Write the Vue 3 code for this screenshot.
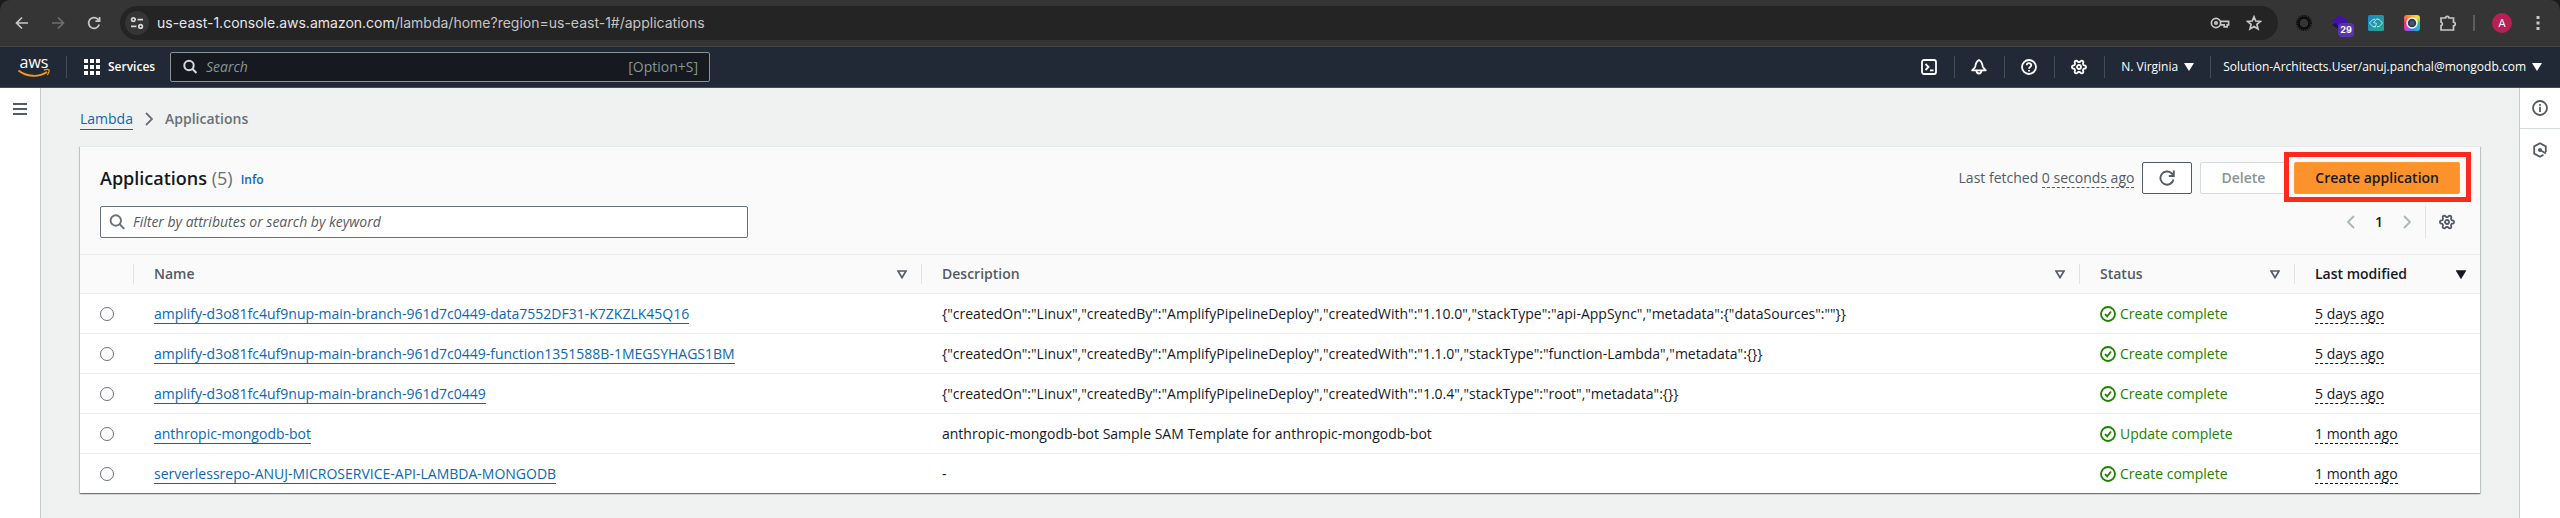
<script setup>
import { ref } from 'vue'

const selected = ref('')

const applications = [
  {
    name: 'amplify-d3o81fc4uf9nup-main-branch-961d7c0449-data7552DF31-K7ZKZLK45Q16',
    description: '{"createdOn":"Linux","createdBy":"AmplifyPipelineDeploy","createdWith":"1.10.0","stackType":"api-AppSync","metadata":{"dataSources":""}}',
    status: 'Create complete',
    modified: '5 days ago'
  },
  {
    name: 'amplify-d3o81fc4uf9nup-main-branch-961d7c0449-function1351588B-1MEGSYHAGS1BM',
    description: '{"createdOn":"Linux","createdBy":"AmplifyPipelineDeploy","createdWith":"1.1.0","stackType":"function-Lambda","metadata":{}}',
    status: 'Create complete',
    modified: '5 days ago'
  },
  {
    name: 'amplify-d3o81fc4uf9nup-main-branch-961d7c0449',
    description: '{"createdOn":"Linux","createdBy":"AmplifyPipelineDeploy","createdWith":"1.0.4","stackType":"root","metadata":{}}',
    status: 'Create complete',
    modified: '5 days ago'
  },
  {
    name: 'anthropic-mongodb-bot',
    description: 'anthropic-mongodb-bot Sample SAM Template for anthropic-mongodb-bot',
    status: 'Update complete',
    modified: '1 month ago'
  },
  {
    name: 'serverlessrepo-ANUJ-MICROSERVICE-API-LAMBDA-MONGODB',
    description: '-',
    status: 'Create complete',
    modified: '1 month ago'
  }
]

const columns = [
  { key: 'name', label: 'Name' },
  { key: 'description', label: 'Description' },
  { key: 'status', label: 'Status' },
  { key: 'modified', label: 'Last modified', sorted: true }
]

// Outline of the six-toothed settings gear in a 16x16 box.
const gearPath = (() => {
  const points = []
  for (let a = 0; a < 360; a += 6) {
    const wave = Math.cos((a * 6 * Math.PI) / 180)
    const r = 6 + 1.1 * Math.tanh(1.8 * wave)
    const t = (a * Math.PI) / 180
    points.push(`${(8 + r * Math.cos(t)).toFixed(2)} ${(8 + r * Math.sin(t)).toFixed(2)}`)
  }
  return `M${points.join('L')}Z`
})()
</script>

<template>
  <div class="page">
    <header class="browser">
      <div class="browser-nav">
        <button type="button" class="bare" aria-label="Back">
          <svg class="ico" viewBox="0 0 16 16"><path d="M14 8H3M8 2.5 2.5 8 8 13.5" stroke="#c7c7c7" /></svg>
        </button>
        <button type="button" class="bare" aria-label="Forward">
          <svg class="ico" viewBox="0 0 16 16"><path d="M2 8h11M8 2.5 13.5 8 8 13.5" stroke="#6f6f6f" /></svg>
        </button>
        <button type="button" class="bare" aria-label="Reload">
          <svg class="ico" viewBox="0 0 16 16"><path d="M13.2 9.6A5.4 5.4 0 1 1 11.9 4.2L13.4 5.8M13.6 2v4.2H9.4" stroke="#c7c7c7" /></svg>
        </button>
      </div>
      <div class="address">
        <span class="site">
          <svg class="ico" viewBox="0 0 16 16" stroke="#d6d6d6">
            <circle cx="4.4" cy="4.6" r="1.8" /><path d="M8.5 4.6H14M2 11.4h5.5" /><circle cx="11.6" cy="11.4" r="1.8" />
          </svg>
        </span>
        <span class="url">us-east-1.console.aws.amazon.com<span class="path">/lambda/home?region=us-east-1#/applications</span></span>
        <button type="button" class="bare" aria-label="Passwords">
          <svg class="key" viewBox="0 0 20 16" stroke="#c7c7c7">
            <circle cx="6" cy="8" r="4.6" /><circle cx="6" cy="8" r="1.2" />
            <path d="M10.4 6.4h8.2v3.4h-1.4v2h-3v-2h-4" />
          </svg>
        </button>
        <button type="button" class="bare" aria-label="Bookmark">
          <svg class="ico" viewBox="0 0 16 16"><path d="m8 1.8 1.8 4.2 4.6.4-3.5 3 1.1 4.5L8 11.5l-4 2.4 1.1-4.500-3.500-3L6.200 6Z" stroke="#c7c7c7" /></svg>
        </button>
      </div>
      <div class="extensions">
        <svg class="ico" viewBox="0 0 16 16">
          <circle cx="8" cy="8" r="5.400" stroke="#0c0c0c" stroke-width="2.200" />
          <circle cx="8" cy="8" r="7.100" stroke="#0c0c0c" stroke-width="1.800" stroke-dasharray="1.200 1" />
        </svg>
        <span class="ext-badge">
          <svg class="ico" viewBox="0 0 16 16">
            <path d="m8 5 8 5-8 5-8-5Z" fill="#1d0f6b" /><path d="m8 0 8 6-8 5.500L0 6Z" fill="#4310a8" />
          </svg>
          <span class="count">29</span>
        </span>
        <svg class="ico" viewBox="0 0 16 16">
          <defs>
            <linearGradient id="teal" x1="0" y1="0" x2="1" y2="1"><stop stop-color="#1f86c4" /><stop offset="1" stop-color="#21a890" /></linearGradient>
          </defs>
          <rect width="16" height="16" rx="1.500" fill="url(#teal)" />
          <path d="M7 4.200 4.800 4.500 1.500 8l3.300 3.500 2.200.3M9 4.200l2.200.3L14.500 8l-3.300 3.500-2.200.3M9.300 3.200 5.500 7.500l3 1L7 12.500" stroke="#c9f1ee" stroke-width="0.900" />
        </svg>
        <span class="lens">
          <svg class="ico" viewBox="0 0 16 16">
            <circle cx="8" cy="8" r="5" fill="#2c3a4b" stroke="#fff" stroke-width="1.500" /><circle cx="8" cy="8" r="2.600" fill="#44566b" />
          </svg>
        </span>
        <svg class="ico" viewBox="0 0 16 16">
          <path d="M1 3h4.600a1.700 1.700 0 0 1 3.400 0h4.500v4.200a1.800 1.800 0 0 1 0 3.600V15H1v-4.300a1.800 1.800 0 0 0 0-3.500Z" stroke="#c7c7c7" stroke-width="1.700" />
        </svg>
      </div>
      <span class="bar-split"></span>
      <button type="button" class="avatar">A</button>
      <button type="button" class="bare" aria-label="Browser menu">
        <svg class="ico" viewBox="0 0 16 16"><path d="M8 1v3M8 6.500v3M8 12v3" stroke="#c7c7c7" stroke-width="3" /></svg>
      </button>
    </header>

    <nav class="topnav">
      <a href="#" class="logo" aria-label="AWS home">
        <svg viewBox="0 -6 34 36">
          <text x="17" y="13" text-anchor="middle" fill="#fff" font-size="16">aws</text>
          <path d="M1.500 15.500c8 6.500 20 7 28.500 1.500" stroke="#f8991d" stroke-width="1.800" />
          <path d="M26.800 15.200c2-.8 4.500-1 5.200-.3.500.8-.3 3.400-1.800 5" stroke="#f8991d" stroke-width="1.300" />
        </svg>
      </a>
      <span class="nav-split"></span>
      <button type="button" class="services">
        <svg class="ico" viewBox="0 0 16 16">
          <path fill="#fff" d="M0 0h4v4H0zM6 0h4v4H6zM12 0h4v4h-4zM0 6h4v4H0zM6 6h4v4H6zM12 6h4v4h-4zM0 12h4v4H0zM6 12h4v4H6zM12 12h4v4h-4z" />
        </svg>
        Services
      </button>
      <label class="global-search">
        <svg class="ico" viewBox="0 0 16 16" stroke="#d5dbdb" stroke-width="2"><circle cx="7" cy="6.500" r="4.700" /><path d="m10.500 10 4 4" /></svg>
        <input type="search" placeholder="Search" aria-label="Search" />
        <span>[Option+S]</span>
      </label>
      <div class="nav-right">
        <button type="button" class="nav-icon" aria-label="CloudShell">
          <svg class="ico" viewBox="0 0 16 16" stroke="#fff" stroke-width="1.800"><rect x="1" y="1" width="14" height="14" rx="2" /><path d="m4.500 5 3 3-3 3M9 11.300h3.500" /></svg>
        </button>
        <button type="button" class="nav-icon" aria-label="Notifications">
          <svg class="ico" viewBox="0 0 16 16" stroke="#fff" stroke-width="1.800" stroke-linejoin="round"><path d="M8 1C5.500 2.500 4.500 4.500 4.200 8L1.200 11.300h13.600l-3-3.300C11.500 4.500 10.500 2.500 8 1ZM5.500 11.500a2.500 3 0 0 0 5 0" /></svg>
        </button>
        <button type="button" class="nav-icon" aria-label="Help">
          <svg class="ico" viewBox="0 0 16 16" stroke="#fff" stroke-width="1.800"><circle cx="8" cy="8" r="7" /><path d="M5.700 6.300C5.700 3.500 10.300 3.500 10.300 6.200 10.300 7.900 8 7.900 8 9.800M8 10.900v1.700" /></svg>
        </button>
        <button type="button" class="nav-icon" aria-label="Settings">
          <svg class="ico" viewBox="0 0 16 16" stroke="#fff" stroke-width="1.800"><path :d="gearPath" /><circle cx="8" cy="8" r="2" /></svg>
        </button>
        <button type="button" class="nav-menu region">N. Virginia<svg class="caret" viewBox="0 0 10 8"><path d="M0 0h10L5 8Z" fill="#fff" /></svg></button>
        <button type="button" class="nav-menu account">Solution-Architects.User/anuj.panchal@mongodb.com<svg class="caret" viewBox="0 0 10 8"><path d="M0 0h10L5 8Z" fill="#fff" /></svg></button>
      </div>
    </nav>

    <div class="body">
      <aside class="rail left">
        <button type="button" class="rail-btn" aria-label="Open navigation">
          <svg class="ico" viewBox="0 0 16 16" stroke="#545b64" stroke-width="2"><path d="M1 3h14M1 8h14M1 13h14" /></svg>
        </button>
      </aside>

      <main>
        <nav class="crumbs" aria-label="Breadcrumb">
          <a href="#">Lambda</a>
          <svg viewBox="0 0 8 14"><path d="m1 1 6 6-6 6" stroke="#687078" stroke-width="1.800" /></svg>
          <span>Applications</span>
        </nav>

        <section class="card">
          <div class="card-head">
            <div class="head-row">
              <h1>Applications <span>(5)</span></h1>
              <a href="#" class="info">Info</a>
              <p class="fetched">Last fetched <span class="dashed">0 seconds ago</span></p>
              <button type="button" class="btn refresh" aria-label="Refresh">
                <svg class="ico" viewBox="0 0 16 16" stroke="#545b64" stroke-width="1.900"><path d="M14.500 9.500A6.600 6.600 0 1 1 12.500 3.200L14.200 5M14.800.5V6H9.800" /></svg>
              </button>
              <button type="button" class="btn delete" disabled>Delete</button>
              <button type="button" class="btn create">Create application</button>
            </div>
            <div class="head-row">
              <label class="filter">
                <svg class="ico" viewBox="0 0 16 16" stroke="#687078" stroke-width="1.900"><circle cx="6.800" cy="6.500" r="5.200" /><path d="m10.600 10.300 4.700 4.600" /></svg>
                <input type="search" placeholder="Filter by attributes or search by keyword" aria-label="Filter applications" />
              </label>
              <div class="pager">
                <button type="button" class="bare" aria-label="Previous page"><svg class="chev" viewBox="0 0 8 14"><path d="M7 1 1 7l6 6" stroke="#aab7b8" stroke-width="1.800" /></svg></button>
                <span class="num">1</span>
                <button type="button" class="bare" aria-label="Next page"><svg class="chev" viewBox="0 0 8 14"><path d="m1 1 6 6-6 6" stroke="#aab7b8" stroke-width="1.800" /></svg></button>
                <button type="button" class="prefs" aria-label="Preferences">
                  <svg class="ico" viewBox="0 0 16 16" stroke="#545b64" stroke-width="1.800"><path :d="gearPath" /><circle cx="8" cy="8" r="2" /></svg>
                </button>
              </div>
            </div>
          </div>

          <table>
            <colgroup>
              <col class="c-pick" /><col class="c-name" /><col /><col class="c-status" /><col class="c-modified" />
            </colgroup>
            <thead>
              <tr>
                <th aria-label="Selection"></th>
                <th v-for="c in columns" :key="c.key" :class="{ sorted: c.sorted }">
                  <div class="th">
                    <span>{{ c.label }}</span>
                    <svg viewBox="0 0 10 9"><path d="M1 1h8L5 7.600Z" :fill="c.sorted ? '#16191f' : 'none'" stroke="currentColor" stroke-width="1.700" /></svg>
                  </div>
                </th>
              </tr>
            </thead>
            <tbody>
              <tr v-for="app in applications" :key="app.name">
                <td class="pick"><input v-model="selected" type="radio" name="application" :value="app.name" :aria-label="app.name" /></td>
                <td><a href="#">{{ app.name }}</a></td>
                <td>{{ app.description }}</td>
                <td>
                  <span class="status">
                    <svg class="ico" viewBox="0 0 16 16" stroke="#1d8102" stroke-width="1.800"><circle cx="8" cy="8" r="7" /><path d="m5 8.200 2.200 2.200L11 5.500" /></svg>
                    {{ app.status }}
                  </span>
                </td>
                <td><span class="dashed">{{ app.modified }}</span></td>
              </tr>
            </tbody>
          </table>
        </section>
      </main>

      <aside class="rail right">
        <button type="button" class="rail-btn" aria-label="Info panel">
          <svg class="ico" viewBox="0 0 16 16" stroke="#545b64" stroke-width="1.800"><circle cx="8" cy="8" r="7" /><path d="M8 6.800V12M8 4v1.800" /></svg>
        </button>
        <button type="button" class="rail-btn" aria-label="Diagnostics">
          <svg class="ico" viewBox="0 0 16 16" stroke="#545b64" stroke-width="1.800"><path d="M13.800 10V4.400L8 1.200 2.200 4.400v7.200L8 14.800l3.500-2" /><circle cx="8" cy="8" r="2" fill="#545b64" stroke="none" /><path d="m8 8 6 3.500" /></svg>
        </button>
      </aside>
    </div>
  </div>
</template>

<style>
body {
  margin: 0;
  background: #1c1c1c;
}
</style>

<style scoped>
* {
  box-sizing: border-box;
}
.page {
  min-height: 100vh;
  display: flex;
  flex-direction: column;
  font-family: "Open Sans", "Noto Sans", sans-serif;
  font-size: 14px;
  line-height: 22px;
  color: #16191f;
}
button,
input {
  font: inherit;
  margin: 0;
  padding: 0;
  border: 0;
  background: none;
  color: inherit;
}
svg {
  display: block;
  flex: none;
  fill: none;
}
.ico {
  width: 16px;
  height: 16px;
}
.browser .ico {
  stroke-width: 1.7;
}
a {
  color: #0b67b2;
  text-decoration: none;
}

.browser {
  height: 47px;
  display: flex;
  align-items: center;
  padding: 0 14px;
  background: #353535;
  border-bottom: 1px solid #454545;
  border-radius: 10px 10px 0 0;
}
.browser-nav {
  display: flex;
  gap: 20px;
}
.address {
  flex: 1;
  height: 34px;
  margin-left: 18px;
  padding: 0 16px 0 5px;
  display: flex;
  align-items: center;
  gap: 16px;
  border-radius: 17px;
  background: #242424;
}
.site {
  width: 24px;
  height: 24px;
  display: grid;
  place-items: center;
  border-radius: 50%;
  background: #353535;
}
.url {
  flex: 1;
  margin-left: -8px;
  font-family: Inter, Roboto, sans-serif;
  color: #e6e6e6;
}
.url .path {
  color: #c4c4c4;
}
.key {
  width: 20px;
  height: 16px;
  stroke-width: 1.7;
}
.extensions {
  display: flex;
  gap: 20px;
  margin-left: 18px;
}
.ext-badge {
  position: relative;
}
.count {
  position: absolute;
  left: 6px;
  top: 8px;
  width: 16px;
  height: 14px;
  border-radius: 4px;
  background: #5a34b0;
  color: #fff;
  font: bold 9px/14px Inter, sans-serif;
  text-align: center;
}
.lens {
  border-radius: 3px;
  background: conic-gradient(#ffb020, #f7e13c, #31c48d, #1fb6e8, #2d7ff0, #d63bd6, #f02a6a, #ff7a3c, #ffb020);
}
.bar-split {
  flex: none;
  width: 2px;
  height: 16px;
  margin: 0 17px;
  background: #5c5c5c;
}
.avatar {
  width: 20px;
  height: 20px;
  margin-right: 18px;
  border-radius: 50%;
  background: #b81f55;
  color: #fff;
  font: 11px/20px Inter, sans-serif;
}

.topnav {
  height: 41px;
  display: flex;
  align-items: center;
  padding: 0 18px 0 17px;
  background: #212936;
  border-bottom: 1px solid #414d5c;
  color: #fff;
  font-size: 12px;
  font-weight: 500;
}
.logo svg {
  width: 34px;
  height: 36px;
}
.nav-split {
  flex: none;
  width: 1px;
  height: 22px;
  margin: 0 17px 0 15px;
  background: #414d5c;
}
.services {
  display: flex;
  align-items: center;
  gap: 8px;
  width: 86px;
  font-weight: 600;
}
.global-search {
  width: 540px;
  height: 30px;
  display: flex;
  align-items: center;
  gap: 8px;
  padding: 0 11px;
  border: 1px solid #879596;
  border-radius: 2px;
  background: #16191f;
  color: #879596;
  font-size: 14px;
  font-weight: 400;
}
.global-search input,
.filter input {
  flex: 1;
  min-width: 0;
  outline: none;
}
.global-search input::placeholder,
.filter input::placeholder {
  color: currentColor;
  opacity: 1;
  font-style: italic;
}
.nav-right {
  margin-left: auto;
  display: flex;
  align-items: center;
}
.nav-icon {
  width: 50px;
  height: 22px;
  padding: 0 16px;
  border-right: 1px solid #414d5c;
}
.nav-menu {
  height: 22px;
  display: flex;
  align-items: center;
  gap: 6px;
}
.region {
  padding: 0 16px;
  border-right: 1px solid #414d5c;
}
.account {
  padding-left: 12px;
}
.caret {
  width: 10px;
  height: 8px;
}

.body {
  flex: 1;
  display: flex;
  background: #f0f2f2;
}
.rail {
  flex: none;
  width: 41px;
  background: #fff;
}
.left {
  border-right: 1px solid #c6cacb;
}
.right {
  border-left: 1px solid #c6cacb;
}
.rail-btn {
  width: 40px;
  height: 41px;
  display: grid;
  place-items: center;
}
.right .rail-btn:first-child {
  border-bottom: 1px solid #d5dbdb;
}
main {
  flex: 1;
  min-width: 0;
  padding: 20px 39px 23px;
}
.crumbs {
  display: flex;
  align-items: center;
  gap: 12px;
  height: 22px;
  margin-bottom: 16px;
}
.crumbs svg {
  width: 8px;
  height: 14px;
}
.crumbs a {
  border-bottom: 1px solid;
  line-height: 20px;
}
.crumbs span {
  font-weight: 600;
  color: #687078;
}

.card {
  border-top: 1px solid #e6e9e9;
  background: #fff;
  box-shadow: 0 1px 1px rgba(0, 28, 36, 0.4), 1px 1px 1px rgba(0, 28, 36, 0.15), -1px 1px 1px rgba(0, 28, 36, 0.15);
}
.card-head {
  display: grid;
  gap: 12px;
  padding: 15px 20px 16px;
  background: #fafafa;
}
.head-row {
  height: 32px;
  display: flex;
  align-items: center;
  gap: 8px;
}
h1 {
  margin: 0;
  font-size: 18px;
  font-weight: 600;
}
h1 span {
  font-weight: 400;
  color: #687078;
}
.info {
  padding-top: 4px;
  font-size: 12px;
  font-weight: 600;
}
.fetched {
  margin: 0 0 0 auto;
  color: #545b64;
}
.dashed {
  border-bottom: 1px dashed currentColor;
}
.btn {
  height: 32px;
  border: 1px solid #545b64;
  border-radius: 2px;
  background: #fff;
  font-weight: 600;
}
.refresh {
  width: 50px;
  padding: 0 16px;
}
.delete {
  padding: 0 20px;
  border-color: #d5dbdb;
  color: #879596;
}
.create {
  position: relative;
  padding: 0 20px;
  border-color: #ff9a2b;
  background: #fc922b;
}
.create::after {
  content: "";
  position: absolute;
  inset: -11px -12px -9px -11px;
  border: 5px solid #fb2a1c;
}
.filter {
  width: 648px;
  height: 32px;
  display: flex;
  align-items: center;
  gap: 8px;
  padding: 0 8px;
  border: 1px solid #687078;
  border-radius: 2px;
  background: #fff;
  color: #545b64;
}
.pager {
  margin-left: auto;
  height: 32px;
  display: flex;
  align-items: center;
}
.chev {
  width: 8px;
  height: 14px;
}
.num {
  width: 48px;
  text-align: center;
  font-weight: 600;
}
.prefs {
  height: 32px;
  margin-left: 14px;
  padding: 0 5px 0 13px;
  border-left: 1px solid #e1e4e4;
}

table {
  width: 100%;
  table-layout: fixed;
  border-collapse: separate;
  border-spacing: 0;
}
.c-pick {
  width: 53px;
}
.c-name {
  width: 788px;
}
.c-status {
  width: 215px;
}
.c-modified {
  width: 186px;
}
th,
td {
  padding: 0;
  border-top: 1px solid #eaeded;
  text-align: left;
}
th {
  height: 39px;
  background: #fafafa;
  color: #545b64;
  font-weight: 600;
}
th.sorted {
  color: #16191f;
}
.th {
  height: 20px;
  display: flex;
  align-items: center;
  justify-content: space-between;
  padding: 0 14px 0 20px;
  border-left: 1px solid #e1e4e4;
  line-height: 20px;
}
.th svg {
  width: 10px;
  height: 9px;
}
td {
  height: 40px;
  padding-left: 21px;
  white-space: nowrap;
}
td a {
  border-bottom: 1px solid;
}
.pick {
  padding-left: 20px;
}
.pick input {
  appearance: none;
  display: block;
  width: 14px;
  height: 14px;
  border: 1px solid #687078;
  border-radius: 50%;
  background: #fff;
}
.pick input:checked {
  border: 4px solid #0b67b2;
}
.status {
  display: flex;
  align-items: center;
  gap: 4px;
  color: #1d8102;
}
</style>
